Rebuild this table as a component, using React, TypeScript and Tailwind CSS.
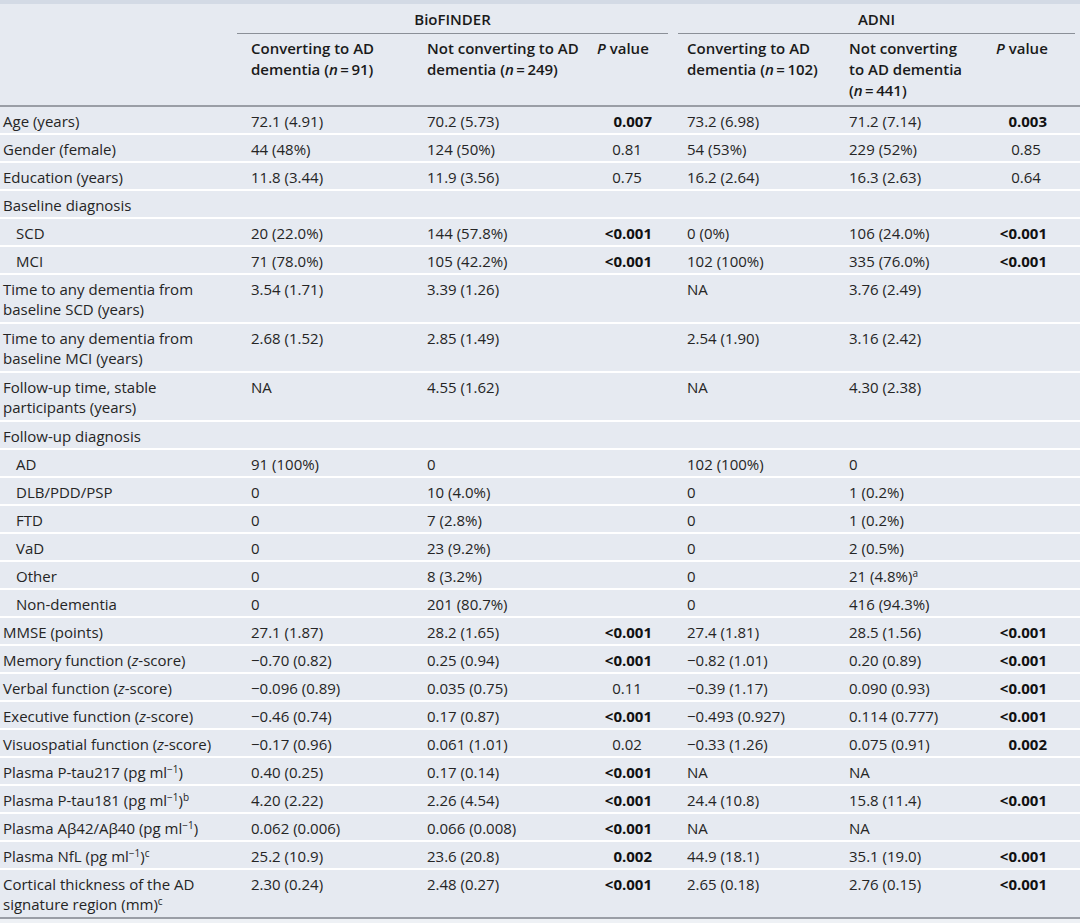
import type { ReactNode } from 'react'

type Row = {
  label: ReactNode
  indent?: boolean
  tall?: boolean
  cells?: ReactNode[]
}

const cols = 'grid grid-cols-[237px_176px_170px_90px_162px_147px_1fr]'

const Sup = ({ children }: { children: ReactNode }) => (
  <sup className="text-[10px]">{children}</sup>
)

const Ml = () => (
  <>
    (pg ml<Sup>−1</Sup>)
  </>
)

const Z = () => <i>z</i>

const N = ({ n }: { n: string }) => (
  <>
    (<i>n</i>
    {'\u2009=\u2009'}
    {n})
  </>
)

const rows: Row[] = [
  { label: 'Age (years)', cells: ['72.1 (4.91)', '70.2 (5.73)', '*0.007', '73.2 (6.98)', '71.2 (7.14)', '*0.003'] },
  { label: 'Gender (female)', cells: ['44 (48%)', '124 (50%)', '0.81', '54 (53%)', '229 (52%)', '0.85'] },
  { label: 'Education (years)', cells: ['11.8 (3.44)', '11.9 (3.56)', '0.75', '16.2 (2.64)', '16.3 (2.63)', '0.64'] },
  { label: 'Baseline diagnosis' },
  { label: 'SCD', indent: true, cells: ['20 (22.0%)', '144 (57.8%)', '*<0.001', '0 (0%)', '106 (24.0%)', '*<0.001'] },
  { label: 'MCI', indent: true, cells: ['71 (78.0%)', '105 (42.2%)', '*<0.001', '102 (100%)', '335 (76.0%)', '*<0.001'] },
  {
    label: (
      <>
        Time to any dementia from
        <br />
        baseline SCD (years)
      </>
    ),
    tall: true,
    cells: ['3.54 (1.71)', '3.39 (1.26)', '', 'NA', '3.76 (2.49)', ''],
  },
  {
    label: (
      <>
        Time to any dementia from
        <br />
        baseline MCI (years)
      </>
    ),
    tall: true,
    cells: ['2.68 (1.52)', '2.85 (1.49)', '', '2.54 (1.90)', '3.16 (2.42)', ''],
  },
  {
    label: (
      <>
        Follow-up time, stable
        <br />
        participants (years)
      </>
    ),
    tall: true,
    cells: ['NA', '4.55 (1.62)', '', 'NA', '4.30 (2.38)', ''],
  },
  { label: 'Follow-up diagnosis' },
  { label: 'AD', indent: true, cells: ['91 (100%)', '0', '', '102 (100%)', '0', ''] },
  { label: 'DLB/PDD/PSP', indent: true, cells: ['0', '10 (4.0%)', '', '0', '1 (0.2%)', ''] },
  { label: 'FTD', indent: true, cells: ['0', '7 (2.8%)', '', '0', '1 (0.2%)', ''] },
  { label: 'VaD', indent: true, cells: ['0', '23 (9.2%)', '', '0', '2 (0.5%)', ''] },
  {
    label: 'Other',
    indent: true,
    cells: [
      '0',
      '8 (3.2%)',
      '',
      '0',
      <>
        21 (4.8%)<Sup>a</Sup>
      </>,
      '',
    ],
  },
  { label: 'Non-dementia', indent: true, cells: ['0', '201 (80.7%)', '', '0', '416 (94.3%)', ''] },
  { label: 'MMSE (points)', cells: ['27.1 (1.87)', '28.2 (1.65)', '*<0.001', '27.4 (1.81)', '28.5 (1.56)', '*<0.001'] },
  {
    label: (
      <>
        Memory function (<Z />-score)
      </>
    ),
    cells: ['−0.70 (0.82)', '0.25 (0.94)', '*<0.001', '−0.82 (1.01)', '0.20 (0.89)', '*<0.001'],
  },
  {
    label: (
      <>
        Verbal function (<Z />-score)
      </>
    ),
    cells: ['−0.096 (0.89)', '0.035 (0.75)', '0.11', '−0.39 (1.17)', '0.090 (0.93)', '*<0.001'],
  },
  {
    label: (
      <>
        Executive function (<Z />-score)
      </>
    ),
    cells: ['−0.46 (0.74)', '0.17 (0.87)', '*<0.001', '−0.493 (0.927)', '0.114 (0.777)', '*<0.001'],
  },
  {
    label: (
      <>
        Visuospatial function (<Z />-score)
      </>
    ),
    cells: ['−0.17 (0.96)', '0.061 (1.01)', '0.02', '−0.33 (1.26)', '0.075 (0.91)', '*0.002'],
  },
  {
    label: (
      <>
        Plasma P-tau217 <Ml />
      </>
    ),
    cells: ['0.40 (0.25)', '0.17 (0.14)', '*<0.001', 'NA', 'NA', ''],
  },
  {
    label: (
      <>
        Plasma P-tau181 <Ml />
        <Sup>b</Sup>
      </>
    ),
    cells: ['4.20 (2.22)', '2.26 (4.54)', '*<0.001', '24.4 (10.8)', '15.8 (11.4)', '*<0.001'],
  },
  {
    label: (
      <>
        Plasma Aβ42/Aβ40 <Ml />
      </>
    ),
    cells: ['0.062 (0.006)', '0.066 (0.008)', '*<0.001', 'NA', 'NA', ''],
  },
  {
    label: (
      <>
        Plasma NfL <Ml />
        <Sup>c</Sup>
      </>
    ),
    cells: ['25.2 (10.9)', '23.6 (20.8)', '*0.002', '44.9 (18.1)', '35.1 (19.0)', '*<0.001'],
  },
  {
    label: (
      <>
        Cortical thickness of the AD
        <br />
        signature region (mm)<Sup>c</Sup>
      </>
    ),
    tall: true,
    cells: ['2.30 (0.24)', '2.48 (0.27)', '*<0.001', '2.65 (0.18)', '2.76 (0.15)', '*<0.001'],
  },
]

// bold p values sit flush right, plain ones are centred
function PCell({ v, adni }: { v: ReactNode; adni?: boolean }) {
  if (typeof v !== 'string' || v === '') return <div />
  const bold = v.startsWith('*')
  const text = bold ? v.slice(1) : v
  if (bold) {
    return (
      <div className={'text-right font-bold text-[#111111] ' + (adni ? 'pr-[33px]' : 'pr-[21px]')}>
        {text}
      </div>
    )
  }
  return <div className={'text-center ' + (adni ? 'pr-[10px]' : 'pr-[2px]')}>{text}</div>
}

export default function App() {
  return (
    <div
      className="min-h-screen w-[1080px] bg-[#eef1f5] text-[15px] leading-[20px] text-[#252525]"
      style={{ fontFamily: '"Open Sans", "Noto Sans", Arial, sans-serif' }}
    >
      <div className="bg-[#e6eaf1]">
        <div className="h-[4px] bg-[#d3dae5]" />

        {/* group headers */}
        <div className={cols + ' text-[15px] font-semibold text-[#1a1a1a]'}>
          <div />
          <div className="col-span-3 mr-[5px] border-b border-[#8b9098] pt-[5px] pb-[4px] text-center">
            BioFINDER
          </div>
          <div className="col-span-3 ml-[5px] mr-[5px] border-b border-[#8b9098] pt-[5px] pb-[4px] text-center">
            ADNI
          </div>
        </div>

        {/* sub headers */}
        <div className={cols + ' border-b-2 border-[#9a9ea6] pt-[4px] pb-[4px] text-[15px] leading-[21px] font-semibold text-[#1a1a1a]'}>
          <div />
          <div className="pl-[14px]">
            Converting to AD
            <br />
            dementia <N n="91" />
          </div>
          <div className="pl-[14px]">
            Not converting to AD
            <br />
            dementia <N n="249" />
          </div>
          <div className="pl-[14px]">
            <i>P</i> value
          </div>
          <div className="pl-[14px]">
            Converting to AD
            <br />
            dementia <N n="102" />
          </div>
          <div className="pl-[14px]">
            Not converting
            <br />
            to AD dementia
            <br />
            <N n="441" />
          </div>
          <div className="pl-[14px]">
            <i>P</i> value
          </div>
        </div>

        {/* body */}
        <div className="border-b-2 border-[#9a9ea6]">
          {rows.map((r, i) => {
            const c = r.cells ?? ['', '', '', '', '', '']
            return (
              <div
                key={i}
                className={
                  cols +
                  ' pt-[4px] ' +
                  (r.tall ? 'pb-[3px] ' : 'pb-[2px] ') +
                  (i > 0 ? 'border-t-2 border-white' : '')
                }
              >
                <div className={r.indent ? 'pl-[16px]' : 'pl-[3px]'}>{r.label}</div>
                <div className="pl-[14px]">{c[0]}</div>
                <div className="pl-[14px]">{c[1]}</div>
                <PCell v={c[2]} />
                <div className="pl-[14px]">{c[3]}</div>
                <div className="pl-[14px]">{c[4]}</div>
                <PCell v={c[5]} adni />
              </div>
            )
          })}
        </div>
      </div>
    </div>
  )
}
